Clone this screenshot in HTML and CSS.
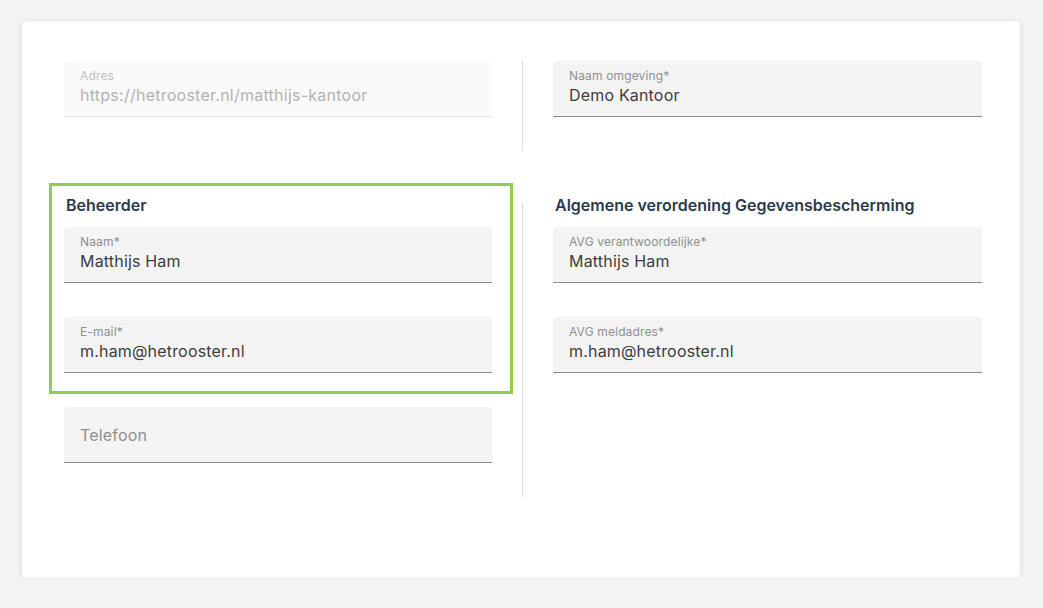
FILE: index.html
```html
<!DOCTYPE html>
<html lang="nl">
<head>
    <meta charset="UTF-8">
    <meta name="viewport" content="width=device-width, initial-scale=1.0">
    <title>Omgeving instellingen</title>
    <link rel="stylesheet" href="styles.css">
</head>
<body>
    <div class="card">
        <div class="row">
            <div class="col">
                <div class="field field-disabled">
                    <label class="field-label" for="adres">Adres</label>
                    <input class="field-input" id="adres" type="text" value="https://hetrooster.nl/matthijs-kantoor" disabled>
                </div>
            </div>
            <div class="divider"></div>
            <div class="col">
                <div class="field">
                    <label class="field-label" for="omgeving">Naam omgeving*</label>
                    <input class="field-input" id="omgeving" type="text" value="Demo Kantoor">
                </div>
            </div>
        </div>

        <div class="row row-second">
            <div class="col">
                <div class="highlight">
                    <h3 class="section-title">Beheerder</h3>
                    <div class="field">
                        <label class="field-label" for="naam">Naam*</label>
                        <input class="field-input" id="naam" type="text" value="Matthijs Ham">
                    </div>
                    <div class="field">
                        <label class="field-label" for="email">E-mail*</label>
                        <input class="field-input" id="email" type="text" value="m.ham@hetrooster.nl">
                    </div>
                </div>
                <div class="field field-empty">
                    <input class="field-input" id="telefoon" type="text" placeholder="Telefoon">
                </div>
            </div>
            <div class="divider divider-low"></div>
            <div class="col">
                <h3 class="section-title">Algemene verordening Gegevensbescherming</h3>
                <div class="field">
                    <label class="field-label" for="avg-naam">AVG verantwoordelijke*</label>
                    <input class="field-input" id="avg-naam" type="text" value="Matthijs Ham">
                </div>
                <div class="field">
                    <label class="field-label" for="avg-mail">AVG meldadres*</label>
                    <input class="field-input" id="avg-mail" type="text" value="m.ham@hetrooster.nl">
                </div>
            </div>
        </div>
    </div>
</body>
</html>
```

FILE: styles.css
```css
body {
    font-family: Inter, "Noto Sans", Arial, sans-serif;
    margin: 0;
    padding: 21px 23px 0 22px;
    background-color: #f4f4f4;
}

/* Card container */
.card {
    background-color: #fff;
    border-radius: 4px;
    box-shadow: 0 1px 6px rgba(0, 0, 0, 0.12);
    padding: 40px 38px 80px 42px;
}

.row {
    display: grid;
    grid-template-columns: 428px 1px 429px;
    column-gap: 30px;
}

.row-second {
    margin-top: 44px;
}

.divider {
    background-color: #dedede;
}

.divider-low {
    margin-top: 8px;
}

.section-title {
    margin: 0 0 12px 2px;
    font-size: 16px;
    line-height: 20px;
    font-weight: 600;
    color: #2b3a4a;
}

/* Green outline round the admin block */
.highlight {
    position: relative;
}

.highlight::after {
    content: "";
    position: absolute;
    top: -12px;
    left: -15px;
    right: -21px;
    bottom: -21px;
    border: 3px solid #8fcf4c;
    pointer-events: none;
}

/* Filled text fields */
.field {
    display: flex;
    flex-direction: column;
    height: 48px;
    margin-bottom: 34px;
    padding: 7px 16px 0;
    background-color: #f4f4f4;
    border-radius: 4px 4px 0 0;
    border-bottom: 1px solid #8c8c8c;
}

.field-label {
    font-size: 12px;
    line-height: 16px;
    letter-spacing: 0.15px;
    color: #8f8f8f;
}

.field-input {
    margin: 1px 0 0;
    padding: 0;
    border: none;
    outline: none;
    background: transparent;
    font-family: inherit;
    font-size: 16px;
    line-height: 20px;
    height: 20px;
    letter-spacing: 0.18px;
    color: #3d3d3d;
}

.field-input::placeholder {
    color: #8f8f8f;
}

.field-empty {
    padding-top: 17px;
    height: 38px;
}

.field-disabled {
    background-color: #fafafa;
    border-bottom-color: #e6e6e6;
}

.field-disabled .field-label {
    color: #bdbdbd;
}

.field-disabled .field-input {
    color: #b2b2b2;
    letter-spacing: 0.25px;
}
```
